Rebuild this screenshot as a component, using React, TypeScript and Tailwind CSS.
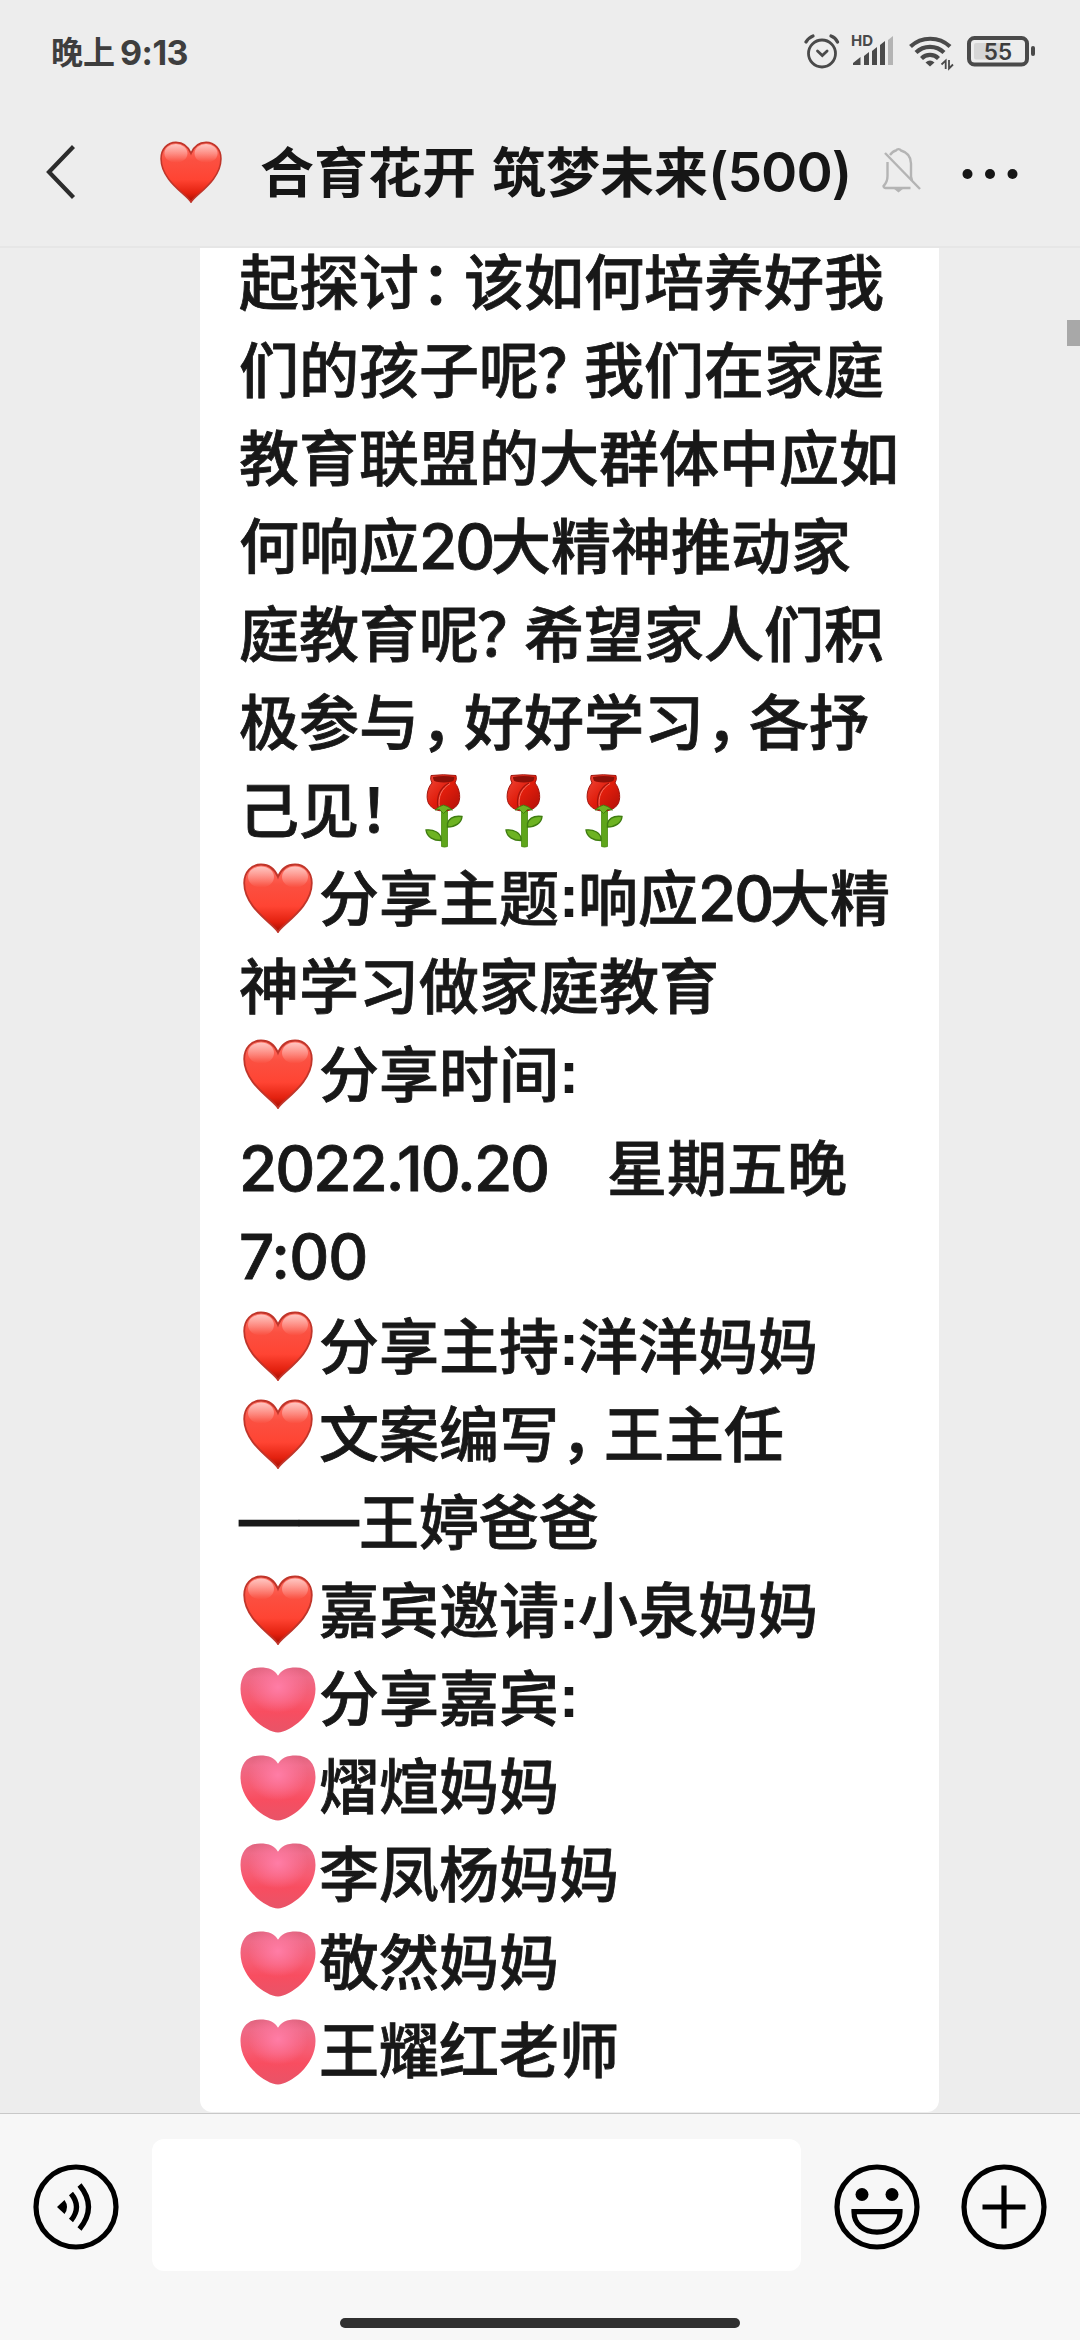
import React from "react";

const cjk = "font-['Noto_Sans_CJK_SC',sans-serif]";

function RedHeart({ className }: { className: string }) {
  return (
    <svg viewBox="0 0 70 70" className={className}>
      <defs>
        <linearGradient id="rh" x1="0" y1="0" x2="0" y2="1">
          <stop offset="0" stopColor="#ff7468" />
          <stop offset="0.3" stopColor="#fb5041" />
          <stop offset="0.62" stopColor="#ff4433" />
          <stop offset="0.85" stopColor="#e3210f" />
          <stop offset="1" stopColor="#a80d00" />
        </linearGradient>
        <linearGradient id="gl" x1="0" y1="0" x2="0" y2="1">
          <stop offset="0" stopColor="#fff" stopOpacity="0.6" />
          <stop offset="1" stopColor="#fff" stopOpacity="0" />
        </linearGradient>
      </defs>
      <path
        d="M35 69 C31 61 1.200 45 1.200 20 C1.200 9 8.500 1.500 18 1.500 C26 1.500 32 6.500 35 14 C38 6.500 44 1.500 52 1.500 C61.500 1.500 68.800 9 68.800 20 C68.800 45 39 61 35 69 Z"
        fill="url(#rh)"
        stroke="#c0352a"
        strokeWidth="1.800"
      />
      <ellipse cx="18" cy="14" rx="13" ry="10.500" fill="url(#gl)" />
      <ellipse cx="52" cy="14" rx="13" ry="10.500" fill="url(#gl)" />
    </svg>
  );
}

function PinkHeart({ className }: { className: string }) {
  const d =
    "M38 65.500 C26 65 0.500 47 0.500 22 C0.500 8 8 0.500 20 0.500 C29 0.500 35 3 38 9 C41 3 47 0.500 56 0.500 C68 0.500 75.500 8 75.500 22 C75.500 47 50 65 38 65.500 Z";
  return (
    <svg viewBox="0 0 76 66" className={className}>
      <defs>
        <linearGradient id="ph" x1="0" y1="0" x2="0" y2="1">
          <stop offset="0" stopColor="#e0647f" />
          <stop offset="0.15" stopColor="#ee6a87" />
          <stop offset="0.5" stopColor="#f75a70" />
          <stop offset="0.68" stopColor="#f84d60" />
          <stop offset="1" stopColor="#e85468" />
        </linearGradient>
        <radialGradient id="pg" cx="0.5" cy="0.3" r="0.4">
          <stop offset="0" stopColor="#ff7da6" />
          <stop offset="1" stopColor="#ff7da6" stopOpacity="0" />
        </radialGradient>
      </defs>
      <path d={d} fill="url(#ph)" />
      <path d={d} fill="url(#pg)" />
    </svg>
  );
}

function RoseIcon() {
  return (
    <svg viewBox="0 0 38 74" className="h-[74px] w-[38px]">
      <defs>
        <linearGradient id="ro" x1="0" y1="0" x2="1" y2="1">
          <stop offset="0" stopColor="#f0493a" />
          <stop offset="0.5" stopColor="#e01d0c" />
          <stop offset="1" stopColor="#b01008" />
        </linearGradient>
      </defs>
      <path d="M16.500 34h6v38.500q-3 1.200-6 0z" fill="#5fa51b" stroke="#4a8a12" strokeWidth="0.800" />
      <path d="M16 66.500C9 66.500 2 63.500 1 56c8-1 14 3 15 8z" fill="#6db322" stroke="#3f7d10" strokeWidth="1.400" />
      <path d="M22.500 53c8 0 14-4 14.500-10.500-8-1-13 2-14.500 7z" fill="#6db322" stroke="#3f7d10" strokeWidth="1.400" />
      <path
        d="M6 1.500q12-1.500 25 0 1.200 4-1 7.500C35 15 36.500 26 32 31.500q-5 5.500-13.500 5.500T5 31.500C0 26 2 14 7 9q-2.200-3.500-1-7.500z"
        fill="url(#ro)"
        stroke="#a3140c"
        strokeWidth="1"
      />
      <path d="M24 9C15 14 11 22 13 34" fill="none" stroke="#a3140c" strokeWidth="1.200" />
      <path d="M25 9.500C17 14.500 12.500 22 14.500 34" fill="none" stroke="#f8705f" strokeWidth="1" />
      <path d="M8 3q10.500-2 21.500 0 0 4-3.500 4.800-7 1.500-14.500 0Q8 7 8 3z" fill="#8c1008" />
      <path d="M10 36q4-4 8.500-5 4.500 1 9 5l-5-0.500-4 4-4-4z" fill="#6db322" stroke="#3f7d10" strokeWidth="0.900" />
    </svg>
  );
}

const Red = () => (
  <span className="flex w-20 shrink-0 pl-1 pt-[5px]">
    <RedHeart className="h-[70px] w-[70px]" />
  </span>
);
const Pink = () => (
  <span className="flex w-20 shrink-0 pl-px pt-[9px]">
    <PinkHeart className="h-[66px] w-[76px]" />
  </span>
);
const Rose = () => (
  <span className="flex w-20 shrink-0 justify-center pt-[7px]">
    <RoseIcon />
  </span>
);
/* Full-width punctuation set in a three-quarter cell */
const Punc = ({ c, shift = "pl-0.5" }: { c: string; shift?: string }) => (
  <span className={`w-[45px] shrink-0 [font-feature-settings:'halt'] ${shift}`}>{c}</span>
);
const Colon = () => (
  <span className="w-[19px] shrink-0 pt-1 font-['Liberation_Sans',sans-serif] text-[60px] font-bold [-webkit-text-stroke:0]">:</span>
);
const Num = ({ children, w }: { children: React.ReactNode; w: string }) => (
  <span className={`shrink-0 pt-[7px] font-['Inter',sans-serif] text-[62px] font-medium ${w}`}>{children}</span>
);

function Line({ children, h = "h-[88px]" }: { children: React.ReactNode; h?: string }) {
  return <div className={`flex items-center whitespace-pre leading-[88px] ${h}`}>{children}</div>;
}

function StatusBar() {
  return (
    <div className="flex h-[104px] items-center pl-[51px] text-[#3e3e3e]">
      <span className="flex w-[753px] items-center text-[32px] font-bold">
        <span className="-mt-1">晚上</span>
        <span className="pl-[5px] font-['Inter',sans-serif] text-[34px] tracking-[-0.5px]">9:13</span>
      </span>
      <svg viewBox="804 30 236 44" className="h-11 w-[236px]">
        <g fill="none" stroke="#4a4a4a" strokeLinecap="round">
          <circle cx="822" cy="53.500" r="13.500" strokeWidth="2.800" />
          <path d="M817.500 51l4.800 4.500 4.800-4.500" strokeWidth="2.800" />
          <path d="M806 42q3-4.500 7-6M831 36q4.500 1.500 6.500 6" strokeWidth="3.200" />
        </g>
        <text x="851" y="46" fontSize="15" fontWeight="700" fill="#4a4a4a" fontFamily="Inter">HD</text>
        <g fill="#4a4a4a">
          <path d="M853 65v-2l7.500-6v8zM864 65V56l5-4v13zM872 65V51l5-4v18zM880 65V45l5-4v24z" />
          <path d="M888 65V40l5-4v29z" fill="#b4b4b4" />
        </g>
        <g fill="none" stroke="#4a4a4a" strokeWidth="4.200">
          <path d="M910.500 46.500a29 29 0 0 1 39.500 0M916 52.500a20 20 0 0 1 28 0M921.500 58.500a12 12 0 0 1 17 0" />
        </g>
        <path d="M925.500 62.500q4.500-4 9 0l-4.500 4z" fill="#4a4a4a" />
        <path d="M941.500 64.500l4.200-4v8.500M949 60v8.500l4-4" fill="none" stroke="#4a4a4a" strokeWidth="1.800" />
        <rect x="969" y="38" width="58" height="26.500" rx="5.500" fill="none" stroke="#4a4a4a" strokeWidth="4" />
        <rect x="974" y="43" width="27" height="16.500" rx="2" fill="#d6d6d6" />
        <rect x="1031" y="46" width="4" height="10" rx="2" fill="#4a4a4a" />
        <text x="998" y="60" textAnchor="middle" fontSize="22.500" fontWeight="600" fill="#3e3e3e" fontFamily="Inter">55</text>
      </svg>
    </div>
  );
}

function Header() {
  return (
    <div className="flex h-[144px] items-center border-b-2 border-[#e6e6e6] pb-1.5 text-[#161616]">
      <svg viewBox="0 0 32 56" className="ml-[45px] h-14 w-8 shrink-0">
        <path d="M28.500 2.500L4 28l24.500 25.500" fill="none" stroke="#2c2c2c" strokeWidth="4.200" />
      </svg>
      <RedHeart className="ml-[83px] h-[62px] w-[62px] shrink-0" />
      <h1 className="-mt-[5px] ml-[38px] flex w-[595px] shrink-0 items-center whitespace-nowrap text-[54px] font-bold">
        合育花开
        <span className="w-4" />
        筑梦未来
        <span className="pt-[5px] font-['Inter',sans-serif] text-[55px] font-semibold tracking-[-1px]">(500)</span>
      </h1>
      <svg viewBox="880 150 44 52" className="ml-[25px] h-[52px] w-11 shrink-0" fill="none" stroke="#b4b4b4" strokeWidth="2.400">
        <path d="M885 157l35 36" />
        <path d="M887.500 166v14q0 6-4 10 0 1.500 2 2h25M890 159q3-4 6-4.500a3 3 0 0 1 5 0q10 3 10 13v13l1 4" />
        <path d="M896 193h5l-2.500 2z" />
      </svg>
      <svg viewBox="0 0 60 12" className="ml-[38px] mt-1 h-3 w-[60px] shrink-0" fill="#161616">
        <circle cx="5.500" cy="6" r="5" />
        <circle cx="28" cy="6" r="5" />
        <circle cx="50.500" cy="6" r="5" />
      </svg>
    </div>
  );
}

function Message() {
  return (
    <div className="ml-[200px] h-[1864px] w-[739px] rounded-b-xl bg-white pl-[39px] text-[60px] font-medium text-[#181818] [-webkit-text-stroke:0.8px_#181818]">
      <div className="flow-root">
        <div className="-mt-[13px]">
          <Line>起探讨<Punc c="：" />该如何培养好我</Line>
          <Line>们的孩子呢<Punc c="？" shift="-ml-0.5 mr-0.5" />我们在家庭</Line>
          <Line>教育联盟的大群体中应如</Line>
          <Line>何响应<Num w="w-[72px] tracking-[-2px]">20</Num>大精神推动家</Line>
          <Line>庭教育呢<Punc c="？" shift="-ml-0.5 mr-0.5" />希望家人们积</Line>
          <Line>极参与<Punc c="，" />好好学习<Punc c="，" />各抒</Line>
          <Line>己见<Punc c="！" shift="" /><Rose /><Rose /><Rose /></Line>
          <Line><Red />分享主题<Colon />响应<Num w="w-[72px] tracking-[-2px]">20</Num>大精</Line>
          <Line>神学习做家庭教育</Line>
          <Line><Red />分享时间<Colon /></Line>
          <div className="h-1.5" />
          <Line><Num w="w-[308px] tracking-[-2px]">2022.10.20</Num>　星期五晚</Line>
          <Line h="h-[89px]"><Num w="w-[130px] tracking-[-1px]">7:00</Num></Line>
          <div className="h-px" />
          <Line><Red />分享主持<Colon />洋洋妈妈</Line>
          <Line><Red />文案编写<Punc c="，" />王主任</Line>
          <Line>
            <span className="w-[120px] shrink-0 font-['Liberation_Sans',sans-serif] font-bold">——</span>
            王婷爸爸
          </Line>
          <Line><Red />嘉宾邀请<Colon />小泉妈妈</Line>
          <Line><Pink />分享嘉宾<Colon /></Line>
          <Line><Pink />熠煊妈妈</Line>
          <Line><Pink />李凤杨妈妈</Line>
          <Line><Pink />敬然妈妈</Line>
          <Line><Pink />王耀红老师</Line>
        </div>
      </div>
    </div>
  );
}

function InputBar() {
  return (
    <div className="h-[227px] border-t border-[#c8c8c8] bg-[#f7f7f7]">
      <div className="flex h-[186px] items-center">
        <svg viewBox="0 0 86 86" className="ml-[33px] h-[86px] w-[86px]" fill="none" stroke="#000" strokeWidth="5.200">
          <circle cx="43" cy="43" r="40" />
          <path d="M24 43l7.500-7q5 7 0 14z" fill="#000" stroke="none" />
          <path d="M38 29.500q11 13.500 0 27M46.500 21q18 22 0 44" />
        </svg>
        <div className="-mt-1 ml-[33px] h-[132px] w-[649px] rounded-xl bg-white" />
        <svg viewBox="0 0 86 86" className="ml-[33px] h-[86px] w-[86px]" fill="none" stroke="#000" strokeWidth="5.200">
          <circle cx="43" cy="43" r="40" />
          <circle cx="28" cy="30.500" r="6.500" fill="#000" stroke="none" />
          <circle cx="58" cy="30.500" r="6.500" fill="#000" stroke="none" />
          <path d="M20 47.700h46c0 13-10 20.500-23 20.500s-23-7.500-23-20.500z" />
        </svg>
        <svg viewBox="0 0 86 86" className="ml-[41px] h-[86px] w-[86px]" fill="none" stroke="#000" strokeWidth="5.200">
          <circle cx="43" cy="43" r="40" />
          <path d="M43 21.500v43M21.500 43h43" />
        </svg>
      </div>
      <div className="mx-auto mt-[18px] h-2.5 w-[400px] rounded-full bg-[#303030]" />
    </div>
  );
}

export default function App() {
  return (
    <div lang="zh-CN" className={`flex h-[2340px] w-[1080px] flex-col overflow-hidden bg-[#ededed] ${cjk}`}>
      <StatusBar />
      <Header />
      <div className="flex h-[1865px] justify-between">
        <Message />
        <div className="mt-[72px] h-[26px] w-[13px] bg-[#a8a8a8]" />
      </div>
      <InputBar />
    </div>
  );
}
